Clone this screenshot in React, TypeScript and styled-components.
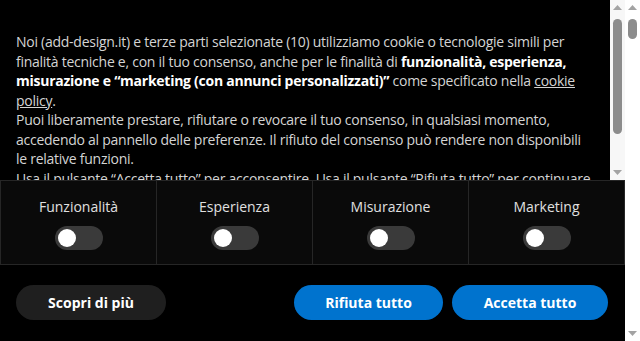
import React, { useState } from 'react';
import styled, { createGlobalStyle } from 'styled-components';

const GlobalStyle = createGlobalStyle`
  html, body {
    margin: 0;
    padding: 0;
    background: #ffffff;
    font-family: "Open Sans", "Liberation Sans", sans-serif;
    overflow: hidden;
  }
  * {
    box-sizing: border-box;
  }
`;

// Window: banner plus the page's own scroll rail
const Viewport = styled.div`
  display: flex;
  height: 100vh;
`;

const Banner = styled.div`
  flex: 1;
  min-width: 0;
  display: flex;
  flex-direction: column;
  background-color: #000000;
  color: #d4d4d4;
`;

const Notice = styled.div`
  flex: 1;
  min-height: 0;
  display: flex;
`;

const NoticeText = styled.div`
  flex: 1;
  min-width: 0;
  overflow: hidden;
  padding: 32px 16px 0 16px;
  font-size: 14px;
  line-height: 19.5px;
  letter-spacing: -0.26px;
`;

const Strong = styled.b`
  font-weight: 700;
  color: #ffffff;
`;

const Link = styled.a`
  color: #d4d4d4;
  text-decoration: underline;
`;

// Drawn scroll rail
const Rail = styled.div<{ $bg: string }>`
  width: 15px;
  flex-shrink: 0;
  display: flex;
  flex-direction: column;
  align-items: center;
  padding: 5px 0;
  background-color: ${(p) => p.$bg};
`;

const Arrow = styled.svg`
  display: block;
  flex-shrink: 0;
`;

const Thumb = styled.div`
  width: 9px;
  flex-shrink: 0;
  border-radius: 5px;
  background-color: #8c8c8c;
`;

const RailFill = styled.div`
  flex: 1;
`;

const ScrollRail: React.FC<{ thumbTop: number; thumbHeight: number; bg?: string }> = ({
  thumbTop,
  thumbHeight,
  bg = '#ffffff',
}) => (
  <Rail $bg={bg}>
    <Arrow width="9" height="5" viewBox="0 0 9 5">
      <path d="M0 5 L4.5 0 L9 5 Z" fill="#a3a3a3" />
    </Arrow>
    <Thumb style={{ marginTop: thumbTop, height: thumbHeight }} />
    <RailFill />
    <Arrow width="9" height="5" viewBox="0 0 9 5">
      <path d="M0 0 L4.5 5 L9 0 Z" fill="#a3a3a3" />
    </Arrow>
  </Rail>
);

const Purposes = styled.div`
  display: grid;
  grid-template-columns: repeat(4, 1fr);
  background-color: #0a0a0a;
  border-top: 1px solid #262626;
  border-bottom: 1px solid #262626;
  border-left: 1px solid #262626;
`;

const Purpose = styled.div`
  display: flex;
  flex-direction: column;
  align-items: center;
  gap: 10px;
  padding: 16px 0 14px;
  border-right: 1px solid #262626;
`;

const PurposeLabel = styled.span`
  font-size: 14px;
  line-height: 19px;
  color: #e0e0e0;
`;

const Switch = styled.button<{ $on: boolean }>`
  position: relative;
  width: 48px;
  height: 24px;
  padding: 0;
  border: none;
  border-radius: 12px;
  cursor: pointer;
  background-color: ${(p) => (p.$on ? '#0073ce' : '#3a3a3a')};

  &::after {
    content: '';
    position: absolute;
    top: 3px;
    left: ${(p) => (p.$on ? '27px' : '3px')};
    width: 18px;
    height: 18px;
    border-radius: 50%;
    background-color: #ffffff;
  }
`;

const Actions = styled.div`
  display: flex;
  align-items: center;
  gap: 9px;
  padding: 20px 17px 21px 16px;
`;

const Spacer = styled.div`
  flex: 1;
`;

const Button = styled.button<{ $primary?: boolean; $width: number }>`
  width: ${(p) => p.$width}px;
  height: 35px;
  border: none;
  border-radius: 18px;
  font-family: "Open Sans", "Liberation Sans", sans-serif;
  font-size: 14px;
  font-weight: 700;
  color: #ffffff;
  cursor: pointer;
  background-color: ${(p) => (p.$primary ? '#0073ce' : '#1f1f1f')};
`;

const purposes = ['Funzionalità', 'Esperienza', 'Misurazione', 'Marketing'];

export default function App() {
  const [enabled, setEnabled] = useState<Record<string, boolean>>({});

  return (
    <>
      <GlobalStyle />
      <Viewport>
        <Banner>
          <Notice>
            <NoticeText>
              Noi (add-design.it) e terze parti selezionate (10) utilizziamo cookie o tecnologie simili per
              finalità tecniche e, con il tuo consenso, anche per le finalità di{' '}
              <Strong>funzionalità, esperienza, misurazione e “marketing (con annunci personalizzati)”</Strong>{' '}
              come specificato nella <Link href="#">cookie policy</Link>.
              <br />
              Puoi liberamente prestare, rifiutare o revocare il tuo consenso, in qualsiasi momento,
              accedendo al pannello delle preferenze. Il rifiuto del consenso può rendere non disponibili
              le relative funzioni.
              <br />
              Usa il pulsante “Accetta tutto” per acconsentire. Usa il pulsante “Rifiuta tutto” per continuare
              senza accettare.
            </NoticeText>
            <ScrollRail thumbTop={9} thumbHeight={115} bg="#f7f7f7" />
          </Notice>
          <Purposes>
            {purposes.map((name) => (
              <Purpose key={name}>
                <PurposeLabel>{name}</PurposeLabel>
                <Switch
                  $on={!!enabled[name]}
                  aria-label={name}
                  onClick={() => setEnabled({ ...enabled, [name]: !enabled[name] })}
                />
              </Purpose>
            ))}
          </Purposes>
          <Actions>
            <Button $width={150}>Scopri di più</Button>
            <Spacer />
            <Button $primary $width={149}>Rifiuta tutto</Button>
            <Button $primary $width={156}>Accetta tutto</Button>
          </Actions>
        </Banner>
        <ScrollRail thumbTop={9} thumbHeight={20} />
      </Viewport>
    </>
  );
}
